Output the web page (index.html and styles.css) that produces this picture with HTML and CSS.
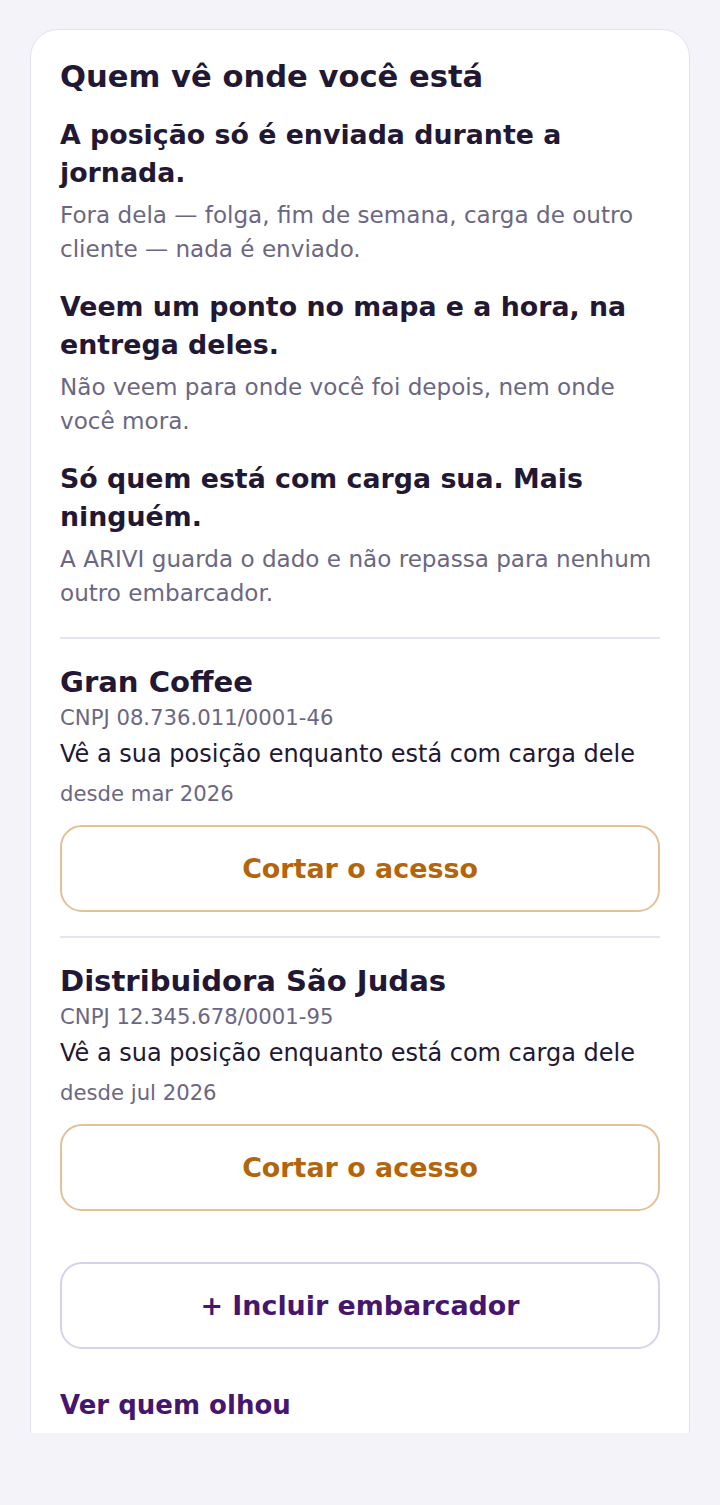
FILE: index.html
```html
<!DOCTYPE html>
<html lang="pt-BR">
<head>
    <meta charset="UTF-8">
    <meta name="viewport" content="width=device-width, initial-scale=1.0">
    <title>Quem vê onde você está</title>
    <link rel="stylesheet" href="styles.css">
</head>
<body>
    <div class="screen">
        <section class="card">
            <h2>Quem vê onde você está</h2>
            <div class="facts">
                <div class="rule">
                    <h3>A posição só é enviada durante a jornada.</h3>
                    <p>Fora dela — folga, fim de semana, carga de outro cliente — nada é enviado.</p>
                </div>
                <div class="rule">
                    <h3>Veem um ponto no mapa e a hora, na entrega deles.</h3>
                    <p>Não veem para onde você foi depois, nem onde você mora.</p>
                </div>
                <div class="rule">
                    <h3>Só quem está com carga sua. Mais ninguém.</h3>
                    <p>A ARIVI guarda o dado e não repassa para nenhum outro embarcador.</p>
                </div>
            </div>

            <div class="shipper">
                <div class="shipper-name">Gran Coffee</div>
                <div class="shipper-doc">CNPJ 08.736.011/0001-46</div>
                <div class="shipper-desc">Vê a sua posição enquanto está com carga dele</div>
                <div class="shipper-since">desde mar 2026</div>
                <button class="btn btn-revoke">Cortar o acesso</button>
            </div>
            <div class="shipper">
                <div class="shipper-name">Distribuidora São Judas</div>
                <div class="shipper-doc">CNPJ 12.345.678/0001-95</div>
                <div class="shipper-desc">Vê a sua posição enquanto está com carga dele</div>
                <div class="shipper-since">desde jul 2026</div>
                <button class="btn btn-revoke">Cortar o acesso</button>
            </div>

            <button class="btn btn-add">+ Incluir embarcador</button>
            <a class="log-link" href="#">Ver quem olhou</a>
        </section>
    </div>
</body>
</html>
```

FILE: styles.css
```css
html, body {
    margin: 0;
    background-color: #f4f3f9;
}
body {
    font-family: "DejaVu Sans", Verdana, sans-serif;
    color: #221833;
}
/* the page is clipped mid-card, like a scrolled view */
.screen {
    height: 1433px;
    overflow: hidden;
    padding: 29px 30px 0;
    box-sizing: border-box;
}
.card {
    background-color: #fff;
    border: 1px solid #e3e0ef;
    border-radius: 28px;
    padding: 30px 29px 80px;
}
h2 {
    font-size: 30.6px;
    line-height: 34px;
    margin: 0 0 22px;
}
.facts {
    padding-bottom: 27px;
}
.rule {
    margin-bottom: 22px;
}
.rule:last-child {
    margin-bottom: 0;
}
.rule h3 {
    font-size: 26.8px;
    line-height: 38px;
    margin: 0 0 6px;
}
.rule p {
    font-size: 23.1px;
    line-height: 34px;
    color: #6b6782;
    margin: 0;
}
.shipper {
    border-top: 2px solid #e6e4f1;
    padding: 25px 0 24px;
}
.shipper-name {
    font-size: 29.1px;
    line-height: 36px;
    font-weight: bold;
}
.shipper-doc {
    font-size: 21.2px;
    line-height: 28px;
    color: #6b6782;
    margin-top: 4px;
}
.shipper-desc {
    font-size: 24px;
    line-height: 32px;
    margin-top: 6px;
}
.shipper-since {
    font-size: 21.2px;
    line-height: 28px;
    color: #6b6782;
    margin-top: 10px;
}
.btn {
    display: block;
    width: 100%;
    height: 87px;
    background-color: #fff;
    border-radius: 22px;
    font-family: inherit;
    font-size: 26.9px;
    font-weight: bold;
    cursor: pointer;
}
.btn-revoke {
    margin-top: 17px;
    border: 2px solid #e2c199;
    color: #b3650c;
}
.btn-add {
    margin-top: 27px;
    border: 2px solid #d9d1ea;
    color: #46166f;
}
.log-link {
    display: block;
    margin-top: 39px;
    font-size: 26px;
    line-height: 34px;
    font-weight: bold;
    color: #46166f;
    text-decoration: none;
}
```
